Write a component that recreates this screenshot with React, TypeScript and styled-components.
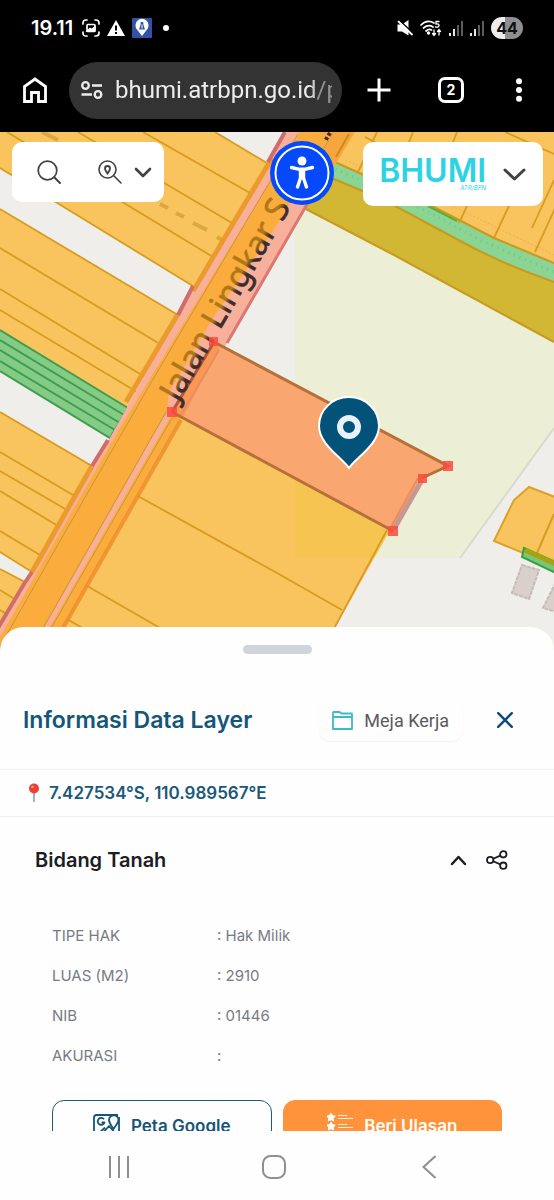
import React from "react";
import styled, { createGlobalStyle, css } from "styled-components";

const GlobalStyle = createGlobalStyle`
  *, *::before, *::after { box-sizing: border-box; }
  body { margin: 0; background: #fff; font-family: Inter, "Liberation Sans", sans-serif; }
  button { font: inherit; border: 0; padding: 0; background: none; color: inherit; cursor: pointer; }
  svg { display: block; flex: none; }
`;

const Screen = styled.div`
  display: flex;
  flex-direction: column;
  height: 100vh;
  overflow: hidden;
  background: #fefefe;
`;

/* ---------- phone status bar ---------- */

const StatusBar = styled.header`
  flex: none;
  display: flex;
  align-items: center;
  justify-content: space-between;
  height: 56px;
  padding: 0 31px;
  background: #000;
  color: #fff;
`;

const StatusGroup = styled.div`
  display: flex;
  align-items: center;
  gap: 7px;
`;

const Clock = styled.time`
  margin-right: 2px;
  font-size: 20px;
  font-weight: 600;
  line-height: 24px;
`;

const Dot = styled.span`
  width: 6px;
  height: 6px;
  margin-left: 4px;
  border-radius: 50%;
  background: #fff;
`;

const Battery = styled.span`
  width: 32px;
  border-radius: 11px;
  background: linear-gradient(90deg, #ededed 44%, #8f8f8f 44%);
  color: #111;
  font-size: 16px;
  font-weight: 700;
  line-height: 22px;
  text-align: center;
`;

/* ---------- browser toolbar ---------- */

const BrowserBar = styled.nav`
  flex: none;
  display: flex;
  align-items: center;
  height: 76px;
  padding: 0 27px 8px 23px;
  background: #000;
  color: #fff;
`;

const AddressBox = styled.label`
  flex: 1;
  min-width: 0;
  display: flex;
  align-items: center;
  gap: 12px;
  height: 57px;
  margin: 0 25px 0 22px;
  padding: 0 10px 0 12px;
  border-radius: 29px;
  background: #333334;
`;

const AddressInput = styled.input`
  flex: 1;
  min-width: 0;
  width: 0;
  padding: 0;
  border: 0;
  outline: 0;
  background: none;
  color: #ececec;
  font-family: Roboto, "Liberation Sans", sans-serif;
  font-size: 24px;
  line-height: 32px;
  mask-image: linear-gradient(90deg, #000 90%, rgba(0, 0, 0, 0.5) 94%);
`;

const BarButtons = styled.div`
  display: flex;
  align-items: center;
  gap: 47px;
`;

const TabCount = styled.button`
  width: 26px;
  height: 26px;
  border: 3px solid #fff;
  border-radius: 7px;
  font-size: 14px;
  font-weight: 700;
  line-height: 20px;
`;

/* ---------- map ---------- */

const MapArea = styled.main`
  position: relative;
  flex: 1;
  min-height: 0;
  background: #efeeea;
`;

const MapDrawing = styled.svg`
  width: 100%;
  height: 100%;
`;

const MapControls = styled.div`
  position: absolute;
  inset: 0 0 auto;
  display: flex;
  align-items: flex-start;
  padding: 10px 11px 0 12px;
`;

const controlBox = css`
  display: flex;
  align-items: center;
  border-radius: 10px;
  background: #fff;
  color: #424242;
`;

const SearchBox = styled.div`
  ${controlBox}
  height: 60px;
  padding: 0 12px 0 25px;
`;

const PlaceSearch = styled.button`
  display: flex;
  align-items: center;
  gap: 12px;
  margin-left: 37px;
`;

const AccessButton = styled.button`
  margin: -1px 29px 0 auto;
`;

const BrandBox = styled.button`
  ${controlBox}
  gap: 17px;
  height: 64px;
  padding: 0 17px 0 16px;
`;

const Brand = styled.span`
  display: flex;
  flex-direction: column;
  align-items: flex-end;
  color: #2ed3e3;
`;

const BrandName = styled.span`
  font-size: 32px;
  font-weight: 600;
  line-height: 28px;
`;

const BrandSub = styled.span`
  font-size: 6px;
  font-style: italic;
  line-height: 6px;
`;

/* ---------- information sheet ---------- */

const Sheet = styled.section`
  position: relative;
  flex: none;
  height: 42vh;
  margin-top: -24px;
  overflow: hidden;
  border-radius: 24px 24px 0 0;
  background: #fefefe;
`;

const HandleArea = styled.div`
  display: flex;
  justify-content: center;
  height: 44px;
  padding-top: 18px;
`;

const Handle = styled.span`
  width: 69px;
  height: 9px;
  border-radius: 5px;
  background: #d1d4da;
`;

const SheetHeader = styled.div`
  display: flex;
  align-items: center;
  height: 99px;
  padding: 0 41px 0 23px;
  border-bottom: 1px solid #f3f3f4;
  color: #15557a;
`;

const Title = styled.h1`
  flex: 1;
  margin: 0;
  font-size: 23px;
  font-weight: 600;
  line-height: 32px;
`;

const DeskButton = styled.button`
  display: flex;
  align-items: center;
  gap: 11px;
  height: 41px;
  margin-right: 34px;
  padding: 0 14px 0 13px;
  border-radius: 12px;
  box-shadow: 0 1px 2px rgba(0, 0, 0, 0.06);
  color: #5a5a5a;
  font-family: Roboto, "Liberation Sans", sans-serif;
  font-size: 18px;
`;

const Coordinates = styled.p`
  display: flex;
  align-items: center;
  gap: 9px;
  height: 47px;
  margin: 0;
  padding: 0 28px;
  border-bottom: 1px solid #f0f0f1;
  color: #1b5878;
  font-size: 17px;
  font-weight: 600;
`;

const SectionHeader = styled.div`
  display: flex;
  align-items: center;
  gap: 19px;
  height: 86px;
  padding: 0 46px 0 35px;
  color: #1c1d24;
`;

const SectionTitle = styled.h2`
  flex: 1;
  margin: 0;
  font-size: 20px;
  font-weight: 600;
  line-height: 28px;
`;

const Details = styled.div`
  padding: 13px 52px 0;
`;

const Facts = styled.table`
  width: 100%;
  border-collapse: collapse;
  table-layout: fixed;
  color: #777b84;
  font-size: 15px;
  line-height: 20px;

  th, td {
    height: 40px;
    padding: 0;
    font-weight: 400;
    text-align: left;
  }
  th { width: 165px; }
`;

const Actions = styled.div`
  display: grid;
  grid-template-columns: 1fr 1fr;
  gap: 11px;
  margin-top: 24px;
`;

const ActionButton = styled.button<{ $filled?: boolean }>`
  display: flex;
  align-items: center;
  justify-content: center;
  gap: 11px;
  height: 51px;
  border: 1px solid ${(p) => (p.$filled ? "#ff933c" : "#1d5a78")};
  border-radius: 12px;
  background: ${(p) => (p.$filled ? "#ff933c" : "#fefefe")};
  color: ${(p) => (p.$filled ? "#fff" : "#15557a")};
  font-size: 17px;
  font-weight: 600;
`;

/* ---------- phone navigation ---------- */

const PhoneNav = styled.nav`
  flex: none;
  display: grid;
  grid-template-columns: repeat(3, 1fr);
  height: 69px;
  padding: 3px 47px 0 41px;
  color: #8f8f8f;
`;

const PhoneNavButton = styled.button`
  display: grid;
  place-items: center;
`;

/* ---------- map data ---------- */

const parcelLines = [
  "M143 132L250 193M78 132L232 223M7 132L213 257M215 132L267 163",
  "M0 168L193 286M0 209L178 315M0 248L160 344M0 289L145 377M0 310L142 395",
  "M0 412L92 466M0 452L73 495M0 471L67 510M0 491L58 526M0 531L40 555M0 552L32 572M0 569L25 582M0 590L13 598M0 610L5 613",
  "M127 490L277 573L342 610M75 579L200 651M55 612L122 651M387 530L322 651",
  "M377 132L358 172M365 137L450 182M413 132L402 160M457 132L444 165M505 132L554 154M467 206L459 223M520 182L494 238M558 202L535 252M554 180L532 228",
];

function MapPicture() {
  return (
    <MapDrawing viewBox="0 132 554 519" preserveAspectRatio="xMidYMin slice" role="img" aria-label="Peta bidang tanah">
      <defs>
        <linearGradient id="roadLabel" x1="0" y1="0" x2="0" y2="1">
          <stop offset="0.54" stopColor="#b0761a" />
          <stop offset="0.66" stopColor="#3d2c2a" />
        </linearGradient>
      </defs>
      <rect y="132" width="554" height="519" fill="#efeeea" />
      <path d="M295 190L554 330V428L460 558H295Z" fill="#ecefd6" />
      <path d="M554 428L460 558" stroke="#d9dacb" strokeWidth="2" />

      {/* parcels west of the road */}
      <g fill="#f9c45d">
        <path d="M0 132H215L267 163L193 286L0 168Z" />
        <path d="M0 209L178 315L126 409L0 330Z" />
        <path d="M0 412L92 466L32 572L0 552Z" />
        <path d="M0 569L25 582L0 630Z" />
      </g>
      <path d="M0 330L128 408L110 438L0 371Z" fill="#84cc86" />
      <path d="M0 330L128 408L110 438L0 371M0 340L124 415M0 350L120 423M0 361L115 430" fill="none" stroke="#3f9d50" strokeWidth="2" />

      {/* parcels south and north-east of the road */}
      <path d="M176 414L390 530L322 651H40Z" fill="#f9c45d" />
      <path d="M295 478L390 530L374 558H295Z" fill="#f6c551" />
      <path d="M330 132H554V268L494 240L430 207L335 162L318 156Z" fill="#f9c45d" />
      <path d="M322 172L335 178L384 200L464 243Q505 265 554 282V342L394 255L304 208Z" fill="#d1b734" />
      <path d="M322 156L335 162L430 205L494 238L554 263V282Q505 265 464 243L384 200L322 174Z" fill="#8ad494" />
      <path d="M322 156L335 162L430 205L494 238L554 263M322 174L384 200L464 243Q505 265 554 282M304 208L394 255L554 342" fill="none" stroke="#c79a20" strokeWidth="2" />
      <path d="M330 167L384 190L430 213L480 240L554 272" fill="none" stroke="#76c28c" strokeWidth="3" strokeDasharray="1 5" />
      <path d="M428 206L457 221" stroke="#5fab3e" strokeWidth="2" />
      <path d="M345 160L450 205L554 255" fill="none" stroke="#e6b355" strokeDasharray="2 2" />
      <g fill="none" stroke="#d79c1f" strokeWidth="1.8">
        {parcelLines.map((d) => (
          <path key={d} d={d} />
        ))}
      </g>
      <path d="M42 132L58 140M160 204L168 208M176 213L184 217M193 223L207 230M217 237L224 241" stroke="#d9a83e" strokeWidth="4" fill="none" />

      {/* road */}
      <path d="M287 132H348L227 343L180 420L48 651H-14L110 438L178 315Z" fill="#f8b09b" />
      <path d="M292 136L118 430L60 532L-10 650" fill="none" stroke="#f8b09b" strokeWidth="6" />
      <path d="M300 132H334L290 203L273 231L213 318L168 394V410L31 651H-8L120 428Z" fill="#faac3d" />
      <path d="M184 412L50 651H36L172 414Z" fill="#faac3d" />
      <path d="M272 158L193 291M178 314L126 402M92 466L32 572" stroke="#eb9a2c" strokeWidth="5" fill="none" />
      <path d="M193 286L178 315M108 440L92 466M32 572L24 584L-2 628M285 132L268 162" stroke="#cf6d69" strokeWidth="4" fill="none" />
      <path d="M298 134L152 381L60 541L-2 650M334 132L290 203M166 412L30 651M172 418L38 651" stroke="#c79542" strokeWidth="1" fill="none" />
      <path d="M181 420L50 651" stroke="#ed8b28" strokeWidth="4" fill="none" opacity="0.8" />
      <path d="M345 137L302 213L227 343" stroke="#dc7771" strokeWidth="3" fill="none" />
      <path d="M334 132H355L326 180L312 170Z" fill="#f7a63c" />
      <path d="M349 134L336 157" stroke="#cc8a24" strokeWidth="2" />
      <path d="M330 133L325 141" stroke="#3d2c2a" strokeWidth="4" strokeDasharray="3 2" />

      {/* selected parcel */}
      <path d="M214 342L448 466L422 478L393 531L172 412Z" fill="#f9a670" />
      <path d="M214 342L221 346L183 417L172 412Z" fill="#fb9858" />
      <path d="M172 412L393 531M214 342L448 466L422 478" fill="none" stroke="#b77039" strokeWidth="3" />
      <path d="M214 342L172 412" stroke="#ae5a3b" strokeWidth="3" />
      <path d="M422 480L394 529" stroke="#c99792" strokeWidth="5" />
      <path d="M418 478L391 527M219 350L181 415" stroke="#e98e5c" strokeWidth="2" />

      <text
        transform="translate(178 403) rotate(-60)"
        fill="url(#roadLabel)"
        stroke="url(#roadLabel)"
        strokeWidth="0.6"
        fontFamily='"Noto Sans", sans-serif'
        fontSize="33"
      >
        Jalan Lingkar S
      </text>
      <g fill="#fb4a3d" fillOpacity="0.85">
        <rect x="209" y="337" width="9" height="9" />
        <rect x="443" y="461" width="10" height="10" />
        <rect x="418" y="474" width="9" height="9" />
        <rect x="388" y="526" width="10" height="10" />
        <rect x="167" y="407" width="10" height="10" />
      </g>

      {/* south-east corner */}
      <path d="M529 487L560 499V568L494 541L514 500Z" fill="#f9c45d" stroke="#dba12d" strokeWidth="2" />
      <path d="M554 514L537 553" stroke="#d79c1f" strokeWidth="2" />
      <path d="M524 548L560 564V575L522 557Z" fill="#76c77a" stroke="#36a044" strokeWidth="2" />
      <path d="M525 550L560 566" stroke="#a7a412" strokeWidth="5" />
      <path d="M522 565L539 570L529 599L512 593ZM558 578L543 608L560 613Z" fill="#d9d0cb" stroke="#c6bbb5" strokeWidth="2" strokeDasharray="4 1" />

      {/* location pin */}
      <path d="M349 468C341 457 319 444 319 426A30 29 0 0 1 379 426C379 444 357 457 349 468Z" fill="#03527a" stroke="#fff" strokeWidth="2" />
      <circle cx="349" cy="427" r="9" fill="none" stroke="#e8f2fc" strokeWidth="6" />
    </MapDrawing>
  );
}

/* ---------- icons ---------- */

const Chevron = ({ w, h, sw, up = false }: { w: number; h: number; sw: number; up?: boolean }) => (
  <svg width={w} height={h} viewBox={`0 0 ${w} ${h}`} fill="none" stroke="currentColor" strokeWidth={sw} strokeLinecap="round" strokeLinejoin="round">
    <path d={up ? `M2 ${h - 2}L${w / 2} 2L${w - 2} ${h - 2}` : `M2 2L${w / 2} ${h - 2}L${w - 2} 2`} />
  </svg>
);

const ScreenshotIcon = () => (
  <svg width="18" height="18" viewBox="0 0 18 18" fill="none" stroke="#fff" strokeWidth="1.7" strokeLinecap="round">
    <path d="M1 5V4Q1 1 4 1H5M13 1H14Q17 1 17 4V5M17 13V14Q17 17 14 17H13M5 17H4Q1 17 1 14V13" />
    <rect x="5" y="5.5" width="8" height="7" rx="1" />
    <path d="M5.5 12L8 9.5L9.5 10.5L12.5 8.5V12Z" fill="#fff" />
  </svg>
);

const WarningIcon = () => (
  <svg width="18" height="16" viewBox="0 0 18 16">
    <path d="M9 0L18 16H0Z" fill="#fff" />
    <path d="M9 5.5V10.5M9 12V14" stroke="#000" strokeWidth="2" />
  </svg>
);

const AppBadge = () => (
  <svg width="20" height="20" viewBox="0 0 20 20">
    <rect width="20" height="20" rx="1" fill="#3553a4" />
    <path d="M10 18L5 11.5A6.5 6.5 0 1 1 15 11.5Z" fill="#fff" />
    <path d="M8.8 4H11.2L11.5 7L13 11.5H7L8.5 7Z" fill="#3553a4" />
    <path d="M10 6.5V10.5" stroke="#fff" />
  </svg>
);

const MuteIcon = () => (
  <svg width="16" height="16" viewBox="0 0 16 16" fill="#fff">
    <path d="M0.5 4.5H5L11.5 0V15.5L5 11.5H0.5Z" />
    <path d="M2 0L16 13" stroke="#000" strokeWidth="1.6" />
    <path d="M1.500 1.500L15 14.500" stroke="#fff" strokeWidth="1.8" strokeLinecap="round" />
  </svg>
);

const WifiIcon = () => (
  <svg width="22" height="17" viewBox="0 0 22 17" fill="none" stroke="#fff" strokeWidth="1.7" strokeLinecap="round">
    <path d="M1 5Q7 -1 14 3M3.5 8Q8.5 4 13 7M6 11Q9 8.5 11.5 10" />
    <circle cx="8.5" cy="13" r="0.8" fill="#fff" />
    <path d="M19 1.5H16V4Q19 3.5 19 5.5T15.5 7M14 10V15M12.5 13.5L14 15.5L15.5 13.5M19 15V10M17.5 11.5L19 9.500L20.5 11.5" strokeWidth="1.3" />
  </svg>
);

const SignalIcon = () => (
  <svg width="14" height="15" viewBox="0 0 14 15" strokeWidth="1.8">
    <path d="M1 15V12M5 15V8" stroke="#fff" />
    <path d="M9 15V4M13 15V0" stroke="#666" />
  </svg>
);

const HomeIcon = () => (
  <svg width="24" height="26" viewBox="0 0 24 26" fill="none" stroke="#fff" strokeWidth="2.8">
    <path d="M1.5 24.5V9.5L12 2L22.5 9.5V24.5H15.5V15.5H8.5V24.5Z" />
  </svg>
);

const SiteIcon = () => (
  <svg width="22" height="18" viewBox="0 0 22 18" fill="none" stroke="#ececec" strokeWidth="2.3">
    <circle cx="4.5" cy="4.5" r="3.3" />
    <circle cx="17" cy="13.5" r="3.3" />
    <path d="M11 4.5H21M0.5 13.5H11" />
  </svg>
);

const SearchIcon = () => (
  <svg width="24" height="24" viewBox="0 0 24 24" fill="none" stroke="currentColor" strokeWidth="1.7" strokeLinecap="round">
    <circle cx="10.5" cy="10.5" r="9.3" />
    <path d="M17.2 17.2L23 23" strokeWidth="2" />
  </svg>
);

const PlaceIcon = () => (
  <svg width="24" height="24" viewBox="0 0 24 24" fill="none" stroke="currentColor" strokeWidth="1.6" strokeLinecap="round">
    <circle cx="9.5" cy="9.5" r="8.5" />
    <path d="M16 16L23 23" />
    <path d="M9.5 13.5C8 11.5 7 10 7 8.5A2.5 2.5 0 0 1 12 8.5C12 10 11 11.5 9.5 13.5Z" strokeWidth="1.9" />
  </svg>
);

const AccessIcon = () => (
  <svg width="64" height="64" viewBox="0 0 64 64">
    <circle cx="32" cy="32" r="32" fill="#0549fb" />
    <circle cx="32" cy="32" r="26.5" fill="none" stroke="#fff" strokeWidth="2" />
    <circle cx="32" cy="20" r="4.5" fill="#fff" />
    <path d="M21.5 26.5L29.5 28.3H34.5L42.5 26.5M32 29V36M30.5 30L30.5 37L27.5 46M33.5 30L33.5 37L36.5 46" fill="none" stroke="#fff" strokeWidth="3.4" strokeLinecap="round" strokeLinejoin="round" />
  </svg>
);

const FolderIcon = () => (
  <svg width="21" height="19" viewBox="0 0 21 19" fill="none" stroke="#3bbcc4" strokeWidth="1.8" strokeLinejoin="round">
    <path d="M1 18V1.500Q1 1 1.5 1H7.5L9.5 2.5H19.5Q20 2.5 20 3V18ZM1 6H20" />
  </svg>
);

const CloseIcon = () => (
  <svg width="16" height="16" viewBox="0 0 16 16" stroke="#0d4c74" strokeWidth="2.4" strokeLinecap="round">
    <path d="M1.2 1.2L14.8 14.8M14.8 1.2L1.2 14.8" />
  </svg>
);

const PushPin = () => (
  <svg width="12" height="20" viewBox="0 0 12 20">
    <path d="M6 9V19" stroke="#92a0aa" strokeWidth="1.6" />
    <circle cx="6" cy="5.5" r="5" fill="#ea4136" />
    <circle cx="4.5" cy="3.8" r="1.3" fill="#f89088" />
  </svg>
);

const ShareIcon = () => (
  <svg width="22" height="20" viewBox="0 0 22 20" fill="none" stroke="currentColor" strokeWidth="1.8">
    <circle cx="4.2" cy="10" r="3.2" />
    <circle cx="17.3" cy="4.3" r="3.2" />
    <circle cx="17.3" cy="15.7" r="3.2" />
    <path d="M7.2 8.7L14.3 5.6M7.2 11.3L14.3 14.4" />
  </svg>
);

const GoogleMapIcon = () => (
  <svg width="27" height="24" viewBox="0 0 27 24" fill="none" stroke="currentColor" strokeWidth="1.8" strokeLinejoin="round">
    <path d="M25 1H3.5Q1 1 1 3.5V20.5Q1 23 3.5 23H23.5Q26 23 26 20.5V3" />
    <path d="M20.5 15C18 11 16 9 16 6A4.500 4.500 0 0 1 25.5 6C25.5 9 23 11 20.5 15Z" />
    <path d="M8 21L16 12L24 21M4 21L12 13.5" />
    <path d="M11 5.3A3.5 3.5 0 1 0 11.5 8.5H8.5" />
  </svg>
);

const ReviewIcon = () => (
  <svg width="26" height="26" viewBox="0 0 26 26" fill="#fff" stroke="#fff">
    {[0, 9, 18].map((y) => (
      <g key={y} transform={`translate(0 ${y})`}>
        <path d="M4 0.5L5.2 2.8L7.8 3.2L6 5L6.4 7.5L4 6.3L1.6 7.5L2 5L0.2 3.2L2.8 2.8Z" strokeWidth="1.4" strokeLinejoin="round" />
        <path d="M11 2.5H20M11 5.5H26" strokeWidth="1.2" strokeOpacity="0.85" />
      </g>
    ))}
  </svg>
);

const facts = [
  { label: "TIPE HAK", value: "Hak Milik" },
  { label: "LUAS (M2)", value: "2910" },
  { label: "NIB", value: "01446" },
  { label: "AKURASI", value: "" },
];

export default function App() {
  return (
    <Screen>
      <GlobalStyle />
      <StatusBar>
        <StatusGroup>
          <Clock>19.11</Clock>
          <ScreenshotIcon />
          <WarningIcon />
          <AppBadge />
          <Dot />
        </StatusGroup>
        <StatusGroup>
          <MuteIcon />
          <WifiIcon />
          <SignalIcon />
          <SignalIcon />
          <Battery>44</Battery>
        </StatusGroup>
      </StatusBar>

      <BrowserBar aria-label="Browser">
        <button aria-label="Home"><HomeIcon /></button>
        <AddressBox>
          <SiteIcon />
          <AddressInput aria-label="Address" defaultValue="bhumi.atrbpn.go.id/peta" />
        </AddressBox>
        <BarButtons>
          <button aria-label="New tab">
            <svg width="24" height="24" viewBox="0 0 24 24" stroke="#fff" strokeWidth="3">
              <path d="M12 0.5V23.5M0.5 12H23.5" />
            </svg>
          </button>
          <TabCount aria-label="Tabs">2</TabCount>
          <button aria-label="Menu">
            <svg width="16" height="24" viewBox="0 0 16 24" fill="#fff">
              <circle cx="8" cy="3.2" r="3" />
              <circle cx="8" cy="12" r="3" />
              <circle cx="8" cy="20.8" r="3" />
            </svg>
          </button>
        </BarButtons>
      </BrowserBar>

      <MapArea>
        <MapPicture />
        <MapControls>
          <SearchBox>
            <button aria-label="Cari"><SearchIcon /></button>
            <PlaceSearch aria-label="Cari lokasi">
              <PlaceIcon />
              <Chevron w={18} h={11} sw={2.6} />
            </PlaceSearch>
          </SearchBox>
          <AccessButton aria-label="Aksesibilitas"><AccessIcon /></AccessButton>
          <BrandBox>
            <Brand>
              <BrandName>BHUMI</BrandName>
              <BrandSub>ATR/BPN</BrandSub>
            </Brand>
            <Chevron w={23} h={13} sw={3} />
          </BrandBox>
        </MapControls>
      </MapArea>

      <Sheet>
        <HandleArea><Handle /></HandleArea>
        <SheetHeader>
          <Title>Informasi Data Layer</Title>
          <DeskButton><FolderIcon />Meja Kerja</DeskButton>
          <button aria-label="Tutup"><CloseIcon /></button>
        </SheetHeader>
        <Coordinates><PushPin />7.427534°S, 110.989567°E</Coordinates>
        <SectionHeader>
          <SectionTitle>Bidang Tanah</SectionTitle>
          <button aria-label="Ciutkan"><Chevron w={17} h={11} sw={2.5} up /></button>
          <button aria-label="Bagikan"><ShareIcon /></button>
        </SectionHeader>
        <Details>
          <Facts>
            <tbody>
              {facts.map((f) => (
                <tr key={f.label}>
                  <th scope="row">{f.label}</th>
                  <td>: {f.value}</td>
                </tr>
              ))}
            </tbody>
          </Facts>
          <Actions>
            <ActionButton><GoogleMapIcon />Peta Google</ActionButton>
            <ActionButton $filled><ReviewIcon />Beri Ulasan</ActionButton>
          </Actions>
        </Details>
      </Sheet>

      <PhoneNav aria-label="Phone">
        <PhoneNavButton aria-label="Recent apps">
          <svg width="20" height="22" viewBox="0 0 20 22" stroke="currentColor" strokeWidth="2">
            <path d="M1 0V22M10 0V22M19 0V22" />
          </svg>
        </PhoneNavButton>
        <PhoneNavButton aria-label="Home screen">
          <svg width="24" height="24" viewBox="0 0 24 24" fill="none" stroke="currentColor" strokeWidth="2">
            <rect x="1" y="1" width="22" height="22" rx="7.5" />
          </svg>
        </PhoneNavButton>
        <PhoneNavButton aria-label="Back">
          <svg width="14" height="24" viewBox="0 0 14 24" fill="none" stroke="currentColor" strokeWidth="2">
            <path d="M13.5 1L1.5 12L13.5 23" />
          </svg>
        </PhoneNavButton>
      </PhoneNav>
    </Screen>
  );
}
